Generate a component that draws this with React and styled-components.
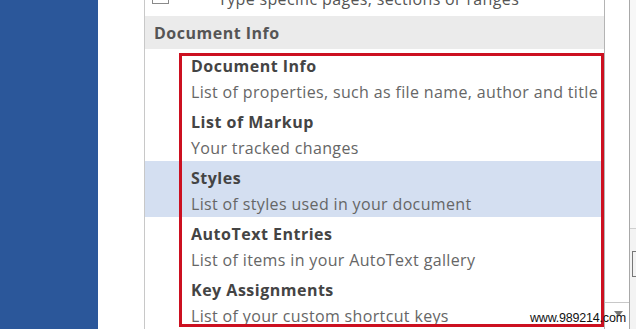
import React from "react";
import styled, { createGlobalStyle } from "styled-components";

const Global = createGlobalStyle`
  html, body {
    margin: 0;
    padding: 0;
    background: #ffffff;
    overflow: hidden;
  }
`;

const Page = styled.div`
  position: relative;
  display: flex;
  width: 636px;
  height: 329px;
  overflow: hidden;
  font-family: "Open Sans", "Noto Sans", sans-serif;
`;

const BlueBar = styled.div`
  width: 98px;
  flex-shrink: 0;
  background: #2b579a;
`;

const Gutter = styled.div`
  width: 46px;
  flex-shrink: 0;
  background: #ffffff;
`;

const Panel = styled.div`
  width: 459px;
  flex-shrink: 0;
  border-left: 1px solid #c8c8c8;
  border-right: 1px solid #b4b4b4;
  background: #ffffff;
  display: flex;
  flex-direction: column;
`;

const TopRow = styled.div`
  height: 17px;
  display: flex;
  align-items: flex-end;
  overflow: hidden;
  padding-left: 7px;
`;

const Check = styled.div`
  width: 15px;
  height: 15px;
  border: 1px solid #8a8a8a;
  margin-bottom: 12px;
  flex-shrink: 0;
`;

const TopText = styled.div`
  margin-left: 49px;
  margin-bottom: 7px;
  font-size: 16px;
  line-height: 20px;
  letter-spacing: 0.35px;
  color: #555555;
  white-space: nowrap;
`;

const Header = styled.div`
  height: 33px;
  line-height: 34px;
  background: #ebebeb;
  padding-left: 9px;
  font-size: 16px;
  font-weight: 700;
  letter-spacing: 0.5px;
  color: #555555;
`;

const Item = styled.div`
  height: 56px;
  padding-left: 46px;
  padding-top: 3px;
  box-sizing: border-box;
  background: ${(p) => (p.$selected ? "#d4dff1" : "transparent")};
  white-space: nowrap;
`;

const Title = styled.div`
  font-size: 16px;
  line-height: 28px;
  font-weight: 700;
  letter-spacing: 0.5px;
  color: #444444;
`;

const Desc = styled.div`
  font-size: 16px;
  line-height: 25px;
  letter-spacing: 0.35px;
  color: #666666;
`;

const ScrollCol = styled.div`
  width: 24px;
  flex-shrink: 0;
  display: flex;
  flex-direction: column;
  background: #ffffff;
`;

const ScrollTrack = styled.div`
  height: 302px;
  border-bottom: 1px solid #c8c8c8;
`;

const ScrollArrow = styled.div`
  flex: 1;
  display: flex;
  justify-content: center;
  padding-top: 8px;
  padding-left: 2px;
`;

const RightStrip = styled.div`
  flex: 1;
  border-left: 1px solid #a8a8a8;
  background: #f3f3f3;
  display: flex;
  flex-direction: column;
`;

const StripUpper = styled.div`
  height: 228px;
  border-bottom: 1px solid #cfcfcf;
  background: #f7f7f7;
`;

const StripIcon = styled.div`
  margin-top: 22px;
  margin-left: 2px;
  width: 5px;
  height: 24px;
  border: 1px solid #777777;
  border-right: none;
`;

const Highlight = styled.div`
  position: absolute;
  left: 179px;
  top: 53px;
  width: 425px;
  height: 274px;
  box-sizing: border-box;
  border: 3px solid #cc1020;
  pointer-events: none;
`;

const Watermark = styled.div`
  position: absolute;
  left: 530px;
  top: 311px;
  font-family: "Liberation Sans", Arial, sans-serif;
  font-size: 12.5px;
  line-height: 15px;
  color: #111111;
  letter-spacing: -0.2px;
`;

const items = [
  { title: "Document Info", desc: "List of properties, such as file name, author and title" },
  { title: "List of Markup", desc: "Your tracked changes" },
  { title: "Styles", desc: "List of styles used in your document", selected: true },
  { title: "AutoText Entries", desc: "List of items in your AutoText gallery" },
  { title: "Key Assignments", desc: "List of your custom shortcut keys" },
];

export default function App() {
  return (
    <>
      <Global />
      <Page>
        <BlueBar />
        <Gutter />
        <Panel>
          <TopRow>
            <Check />
            <TopText>Type specific pages, sections or ranges</TopText>
          </TopRow>
          <Header>Document Info</Header>
          {items.map((it) => (
            <Item key={it.title} $selected={it.selected}>
              <Title>{it.title}</Title>
              <Desc>{it.desc}</Desc>
            </Item>
          ))}
        </Panel>
        <ScrollCol>
          <ScrollTrack />
          <ScrollArrow>
            <svg width="9" height="6" viewBox="0 0 9 6">
              <path d="M0 0 H9 L4.5 5.5 Z" fill="#777777" />
            </svg>
          </ScrollArrow>
        </ScrollCol>
        <RightStrip>
          <StripUpper />
          <StripIcon />
        </RightStrip>
        <Highlight />
        <Watermark>www.989214.com</Watermark>
      </Page>
    </>
  );
}
